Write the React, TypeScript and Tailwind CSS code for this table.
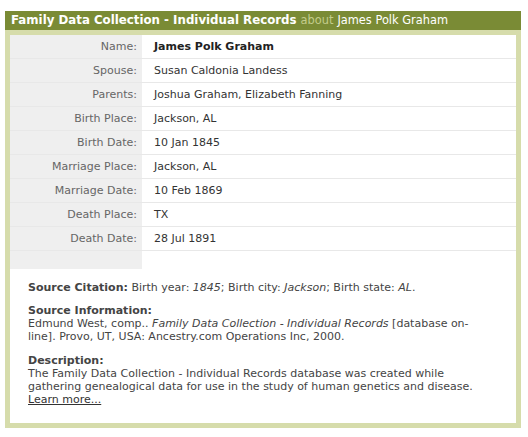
const rows = [
  { label: "Name", value: "James Polk Graham", bold: true },
  { label: "Spouse", value: "Susan Caldonia Landess" },
  { label: "Parents", value: "Joshua Graham, Elizabeth Fanning" },
  { label: "Birth Place", value: "Jackson, AL" },
  { label: "Birth Date", value: "10 Jan 1845" },
  { label: "Marriage Place", value: "Jackson, AL" },
  { label: "Marriage Date", value: "10 Feb 1869" },
  { label: "Death Place", value: "TX" },
  { label: "Death Date", value: "28 Jul 1891" },
];

export default function App() {
  return (
    <div className="bg-white w-[528px] h-[437px] pt-[11px] pl-[5px] font-['DejaVu_Sans',Verdana,sans-serif]">
      <div className="w-[516px]">
        <div className="bg-[#7a8b35] h-[19px] px-[6px] flex items-center text-[11.8px] font-bold text-white whitespace-nowrap">
          Family Data Collection - Individual Records
          <span className="font-normal text-[11.4px] text-[#c3cc8c] ml-[4px]">about</span>
          <span className="font-normal text-[11.4px] ml-[4px]">James Polk Graham</span>
        </div>
        <div className="bg-[#d6dcab] p-[5px]">
          <div className="bg-white">
            <div>
              {rows.map((r) => (
                <div key={r.label} className="flex h-[24px] border-b border-[#e8e8e8]">
                  <div className="w-[132px] bg-[#efefef] text-right pr-[5px] pt-[2px] text-[11px] text-[#666] flex items-center justify-end">
                    {r.label}:
                  </div>
                  <div
                    className={`flex-1 pl-[12px] pt-[2px] text-[11px] flex items-center ${
                      r.bold ? "font-bold text-[#222]" : "text-[#333]"
                    }`}
                  >
                    {r.value}
                  </div>
                </div>
              ))}
              <div className="flex h-[18px]">
                <div className="w-[132px] bg-[#efefef]" />
              </div>
            </div>
            <div className="pl-[18px] pr-[40px] pt-[12px] pb-[17px] text-[11px] leading-[13px] text-[#444]">
              <p>
                <b>Source Citation:</b> Birth year: <i>1845</i>; Birth city: <i>Jackson</i>; Birth state:{" "}
                <i>AL</i>.
              </p>
              <p className="mt-[10px]">
                <b>Source Information:</b>
                <br />
                Edmund West, comp.. <i>Family Data Collection - Individual Records</i> [database on-line].
                Provo, UT, USA: Ancestry.com Operations Inc, 2000.
              </p>
              <p className="mt-[11px]">
                <b>Description:</b>
                <br />
                The Family Data Collection - Individual Records database was created while gathering
                genealogical data for use in the study of human genetics and disease.
                <br />
                <a href="#" className="underline text-[#333]">
                  Learn more...
                </a>
              </p>
            </div>
          </div>
        </div>
      </div>
    </div>
  );
}
